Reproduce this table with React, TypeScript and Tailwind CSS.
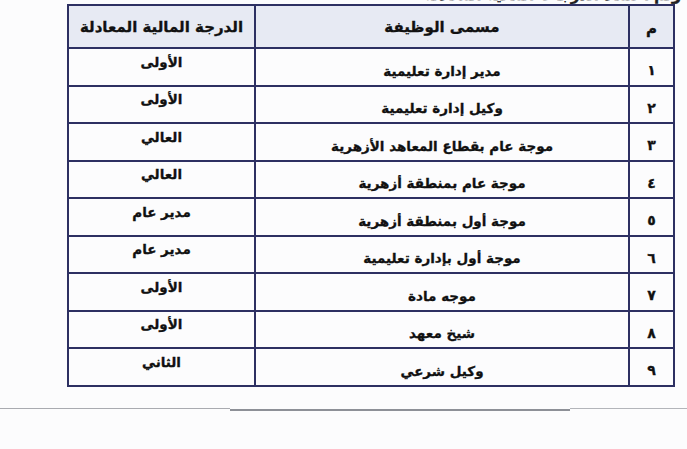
import React from 'react';

const rows = [
  { n: '١', title: 'مدير إدارة تعليمية', grade: 'الأولى' },
  { n: '٢', title: 'وكيل إدارة تعليمية', grade: 'الأولى' },
  { n: '٣', title: 'موجة عام بقطاع المعاهد الأزهرية', grade: 'العالي' },
  { n: '٤', title: 'موجة عام بمنطقة أزهرية', grade: 'العالي' },
  { n: '٥', title: 'موجة أول بمنطقة أزهرية', grade: 'مدير عام' },
  { n: '٦', title: 'موجة أول بإدارة تعليمية', grade: 'مدير عام' },
  { n: '٧', title: 'موجه مادة', grade: 'الأولى' },
  { n: '٨', title: 'شيخ معهد', grade: 'الأولى' },
  { n: '٩', title: 'وكيل شرعي', grade: 'الثاني' },
];

export default function App() {
  return (
    <div className="w-[687px] h-[449px] overflow-hidden bg-[#fcfcfd] font-['DejaVu_Sans',sans-serif] font-bold text-[#111] [-webkit-text-stroke:0.3px_#111]">
      {/* cut-off line of text above the table */}
      <div className="h-[4px] overflow-hidden" dir="rtl">
        <div className="-mt-[13px] pr-[6px] text-[15px] leading-[16px] text-[#222] tracking-[3px]">
          وتم اعتماد الدرجات المالية المعادلة
        </div>
      </div>

      <table dir="rtl" className="ml-[67px] w-[606px] border-collapse table-fixed">
        <colgroup>
          <col className="w-[45px]" />
          <col className="w-[374px]" />
          <col className="w-[187px]" />
        </colgroup>
        <thead>
          <tr className="h-[43px] bg-[#e7eaf3]">
            <th className="border-2 border-[#2d3062] text-[15px] font-bold pt-[6px]">م</th>
            <th className="border-2 border-[#2d3062] text-[15px] font-bold pt-[1px]">مسمى الوظيفة</th>
            <th className="border-2 border-[#2d3062] text-[15px] font-bold pt-[1px]">الدرجة المالية المعادلة</th>
          </tr>
        </thead>
        <tbody>
          {rows.map((r) => (
            <tr key={r.n} className="h-[37.5px]">
              <td className="border-2 border-[#2d3062] text-center text-[14px] pt-[8px]">{r.n}</td>
              <td className="border-2 border-[#2d3062] text-center text-[13.5px] pt-[8px]">{r.title}</td>
              <td className="border-2 border-[#2d3062] text-center text-[13.5px] pb-[10px]">{r.grade}</td>
            </tr>
          ))}
        </tbody>
      </table>

      <div className="mt-[21px] flex items-start">
        <div className="w-[230px] h-[1px] bg-[#a9abb0]" />
        <div className="w-[340px] h-[2px] mt-[1px] bg-[#8d9097]" />
        <div className="flex-1 h-[1px] bg-[#b3b5ba]" />
      </div>
    </div>
  );
}
